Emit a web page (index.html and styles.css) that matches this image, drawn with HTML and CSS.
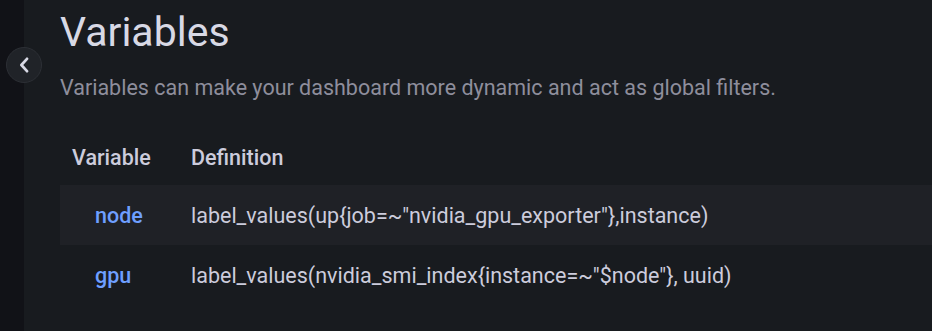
FILE: index.html
```html
<!DOCTYPE html>
<html lang="en">
<head>
    <meta charset="UTF-8">
    <meta name="viewport" content="width=device-width, initial-scale=1.0">
    <title>Variables</title>
    <link rel="stylesheet" href="styles.css">
</head>
<body>
    <div class="layout">
        <div class="sidebar"></div>
        <div class="main">
            <button class="back-btn" aria-label="Back">
                <svg width="16" height="16" viewBox="0 0 16 16">
                    <path d="M11 1.8 L5.4 8 L11 14.2" fill="none" stroke="#d8d9e5" stroke-width="2.7" stroke-linecap="round" stroke-linejoin="round"/>
                </svg>
            </button>
            <h1>Variables</h1>
            <p class="subtitle">Variables can make your dashboard more dynamic and act as global filters.</p>
            <table class="var-table">
                <thead>
                    <tr>
                        <th class="col-name">Variable</th>
                        <th>Definition</th>
                    </tr>
                </thead>
                <tbody>
                    <tr class="striped">
                        <td class="col-name"><a href="#" class="var-link">node</a></td>
                        <td>label_values(up{job=~"nvidia_gpu_exporter"},instance)</td>
                    </tr>
                    <tr>
                        <td class="col-name"><a href="#" class="var-link">gpu</a></td>
                        <td>label_values(nvidia_smi_index{instance=~"$node"}, uuid)</td>
                    </tr>
                </tbody>
            </table>
        </div>
    </div>
</body>
</html>
```

FILE: styles.css
```css
body {
    font-family: Roboto, "Noto Sans", sans-serif;
    background: #181b1f;
    color: #ccccdc;
    margin: 0;
    padding: 0;
}
.layout {
    display: flex;
    min-height: 331px;
}
.sidebar {
    width: 24px;
    background: #111217;
    flex-shrink: 0;
}
.main {
    position: relative;
    flex: 1;
    padding-left: 36px;
}
.back-btn {
    position: absolute;
    left: -18px;
    top: 47px;
    width: 36px;
    height: 36px;
    border-radius: 50%;
    border: 1px solid #2c2f35;
    background: #202328;
    display: flex;
    align-items: center;
    justify-content: center;
    padding: 0;
    cursor: pointer;
}
h1 {
    font-size: 41px;
    font-weight: 400;
    color: #d8d9e5;
    margin: 0;
    line-height: 64px;
}
.subtitle {
    font-size: 21.5px;
    color: #8e8e9c;
    margin: 9px 0 0;
    line-height: 30px;
}
.var-table {
    border-collapse: collapse;
    width: 100%;
    margin-top: 26px;
    font-size: 21.5px;
}
.var-table th {
    text-align: left;
    font-weight: 500;
    color: #ccccdc;
    height: 56px;
    padding: 0;
}
.var-table th.col-name {
    padding-left: 12px;
    width: 119px;
}
.var-table td {
    height: 60px;
    padding: 0;
    color: #ccccdc;
}
.var-table td.col-name {
    padding-left: 35px;
}
.striped {
    background: #1f2126;
}
.var-link {
    color: #6e9fff;
    text-decoration: none;
    font-weight: 500;
}
```
